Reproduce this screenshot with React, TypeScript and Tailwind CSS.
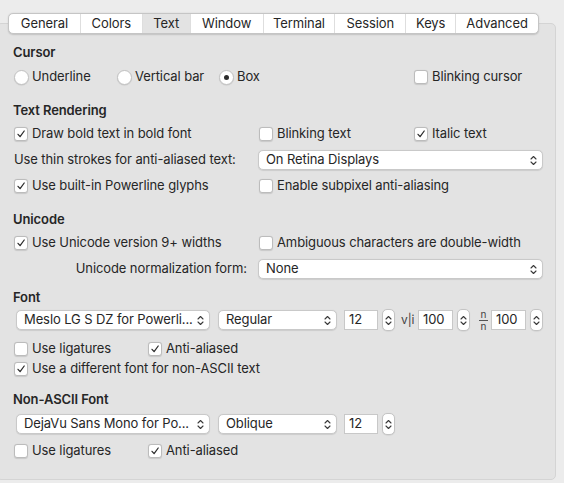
import React from "react";

const font = { fontFamily: "Inter, 'Noto Sans', 'Liberation Sans', sans-serif" };

function Chev({ w = 7, h = 11 }: { w?: number; h?: number }) {
  return (
    <svg width={w} height={h} viewBox="0 0 7 11" className="shrink-0">
      <path d="M1 4 L3.5 1.5 L6 4" fill="none" stroke="#3a3a3a" strokeWidth="1.1" strokeLinecap="round" strokeLinejoin="round" />
      <path d="M1 7 L3.5 9.5 L6 7" fill="none" stroke="#3a3a3a" strokeWidth="1.1" strokeLinecap="round" strokeLinejoin="round" />
    </svg>
  );
}

function Check({ checked, label }: { checked?: boolean; label: string }) {
  return (
    <div className="flex items-center gap-[4px]">
      <span className="w-[14px] h-[14px] rounded-[3px] bg-white border border-[#bcbcbc] shadow-[0_0.5px_1px_rgba(0,0,0,0.12)] flex items-center justify-center shrink-0">
        {checked && (
          <svg width="10" height="10" viewBox="0 0 10 10">
            <path d="M2 5.3 L4.1 7.7 L8.2 2" fill="none" stroke="#2c2c2c" strokeWidth="1.25" strokeLinecap="round" strokeLinejoin="round" />
          </svg>
        )}
      </span>
      <span className="whitespace-nowrap">{label}</span>
    </div>
  );
}

function Radio({ checked, label }: { checked?: boolean; label: string }) {
  return (
    <div className="flex items-center gap-[3px]">
      <span className="w-[15px] h-[15px] rounded-full bg-white border border-[#c2c2c2] shadow-[0_0.5px_1px_rgba(0,0,0,0.12)] flex items-center justify-center shrink-0">
        {checked && <span className="w-[5px] h-[5px] rounded-full bg-[#2c2c2c]" />}
      </span>
      <span className="whitespace-nowrap">{label}</span>
    </div>
  );
}

function Select({ text, className }: { text: string; className: string }) {
  return (
    <div className={"h-[20px] bg-white border border-[#c9c9c9] rounded-[5px] shadow-[0_0.5px_1px_rgba(0,0,0,0.1)] flex items-center pl-[7px] pr-[5px] shrink-0 " + className}>
      <span className="flex-1 whitespace-nowrap overflow-hidden">{text}</span>
      <Chev />
    </div>
  );
}

function Field({ value, className }: { value: string; className: string }) {
  return (
    <div className={"h-[20px] bg-white border border-[#c8c8c8] flex items-center pl-[4px] shrink-0 " + className}>
      {value}
    </div>
  );
}

function Stepper() {
  return (
    <div className="w-[13px] h-[22px] rounded-[5px] bg-white border border-[#c4c4c4] shadow-[0_0.5px_1px_rgba(0,0,0,0.1)] flex items-center justify-center shrink-0">
      <Chev w={7} h={13} />
    </div>
  );
}

function Header({ children, className = "" }: { children: React.ReactNode; className?: string }) {
  return <div className={"h-[24px] flex items-center font-semibold " + className}>{children}</div>;
}

const tabs: [string, string][] = [
  ["General", "w-[71px]"],
  ["Colors", "w-[62px]"],
  ["Text", "w-[48px]"],
  ["Window", "w-[73px]"],
  ["Terminal", "w-[72px]"],
  ["Session", "w-[71px]"],
  ["Keys", "w-[50px]"],
  ["Advanced", "w-[83px]"],
];

export default function App() {
  return (
    <div className="w-[564px] h-[483px] bg-[#ececec] overflow-hidden text-[13px] text-[#262626] tracking-[-0.1px]" style={font}>
      <div className="pt-[23px]">
        <div className="ml-[-4px] w-[560px] h-[457px] bg-[#e3e3e3] border border-[#d4d4d4] rounded-[5px]">
          <div className="mt-[-11px] ml-[11px] flex h-[21px] w-[531px] bg-white border border-[#c5c5c5] rounded-[5px] shadow-[0_0.5px_1.5px_rgba(0,0,0,0.15)] overflow-hidden">
            {tabs.map(([t, w], i) => (
              <div
                key={t}
                className={
                  "h-full flex items-center justify-center pt-[1px] " +
                  w +
                  (i > 0 ? " border-l border-[#dedede]" : "") +
                  (t === "Text" ? " bg-[#e3e3e3]" : "")
                }
              >
                {t}
              </div>
            ))}
          </div>

          <div className="pl-[16px] pt-[7px]">
            <Header>Cursor</Header>
            <div className="h-[24px] flex items-center pl-[1px]">
              <div className="w-[103px]"><Radio label="Underline" /></div>
              <div className="w-[102px]"><Radio label="Vertical bar" /></div>
              <div className="w-[195px]"><Radio checked label="Box" /></div>
              <Check label="Blinking cursor" />
            </div>

            <Header className="mt-[10px]">Text Rendering</Header>
            <div className="h-[22px] flex items-center pl-[1px]">
              <div className="w-[245px]"><Check checked label="Draw bold text in bold font" /></div>
              <div className="w-[155px]"><Check label="Blinking text" /></div>
              <Check checked label="Italic text" />
            </div>
            <div className="h-[30px] flex items-center pl-[1px]">
              <div className="w-[244px] whitespace-nowrap">Use thin strokes for anti-aliased text:</div>
              <Select text="On Retina Displays" className="w-[285px]" />
            </div>
            <div className="h-[22px] flex items-center pl-[1px]">
              <div className="w-[245px]"><Check checked label="Use built-in Powerline glyphs" /></div>
              <Check label="Enable subpixel anti-aliasing" />
            </div>

            <Header className="mt-[11px]">Unicode</Header>
            <div className="h-[22px] flex items-center pl-[1px]">
              <div className="w-[245px]"><Check checked label="Use Unicode version 9+ widths" /></div>
              <Check label="Ambiguous characters are double-width" />
            </div>
            <div className="h-[30px] flex items-center pl-[1px]">
              <div className="w-[233px] text-right whitespace-nowrap">Unicode normalization form:</div>
              <div className="w-[11px]" />
              <Select text="None" className="w-[285px]" />
            </div>

            <Header className="mt-[2px]">Font</Header>
            <div className="h-[20px] flex items-center pl-[3px]">
              <Select text="Meslo LG S DZ for Powerli..." className="w-[194px]" />
              <Select text="Regular" className="w-[119px] ml-[8px]" />
              <Field value="12" className="w-[34px] ml-[7px]" />
              <div className="ml-[4px]"><Stepper /></div>
              <span className="ml-[6px] w-[17px] text-[12px] text-[#444] whitespace-nowrap">v|i</span>
              <Field value="100" className="w-[35px]" />
              <div className="ml-[4px]"><Stepper /></div>
              <div className="ml-[6px] w-[15px] flex flex-col items-center text-[10px] leading-[9px] text-[#444]">
                <span>n</span>
                <span className="w-[9px] h-px bg-[#555] my-[1px]" />
                <span>n</span>
              </div>
              <Field value="100" className="w-[35px]" />
              <div className="ml-[4px]"><Stepper /></div>
            </div>
            <div className="mt-[8px] h-[22px] flex items-center pl-[1px]">
              <div className="w-[134px]"><Check label="Use ligatures" /></div>
              <Check checked label="Anti-aliased" />
            </div>
            <div className="h-[18px] flex items-center pl-[1px]">
              <Check checked label="Use a different font for non-ASCII text" />
            </div>

            <Header className="mt-[10px]">Non-ASCII Font</Header>
            <div className="mt-[2px] h-[20px] flex items-center pl-[3px]">
              <Select text="DejaVu Sans Mono for Po..." className="w-[194px]" />
              <Select text="Oblique" className="w-[119px] ml-[8px]" />
              <Field value="12" className="w-[34px] ml-[7px]" />
              <div className="ml-[4px]"><Stepper /></div>
            </div>
            <div className="mt-[6px] h-[22px] flex items-center pl-[1px]">
              <div className="w-[134px]"><Check label="Use ligatures" /></div>
              <Check checked label="Anti-aliased" />
            </div>
          </div>
        </div>
      </div>
    </div>
  );
}
